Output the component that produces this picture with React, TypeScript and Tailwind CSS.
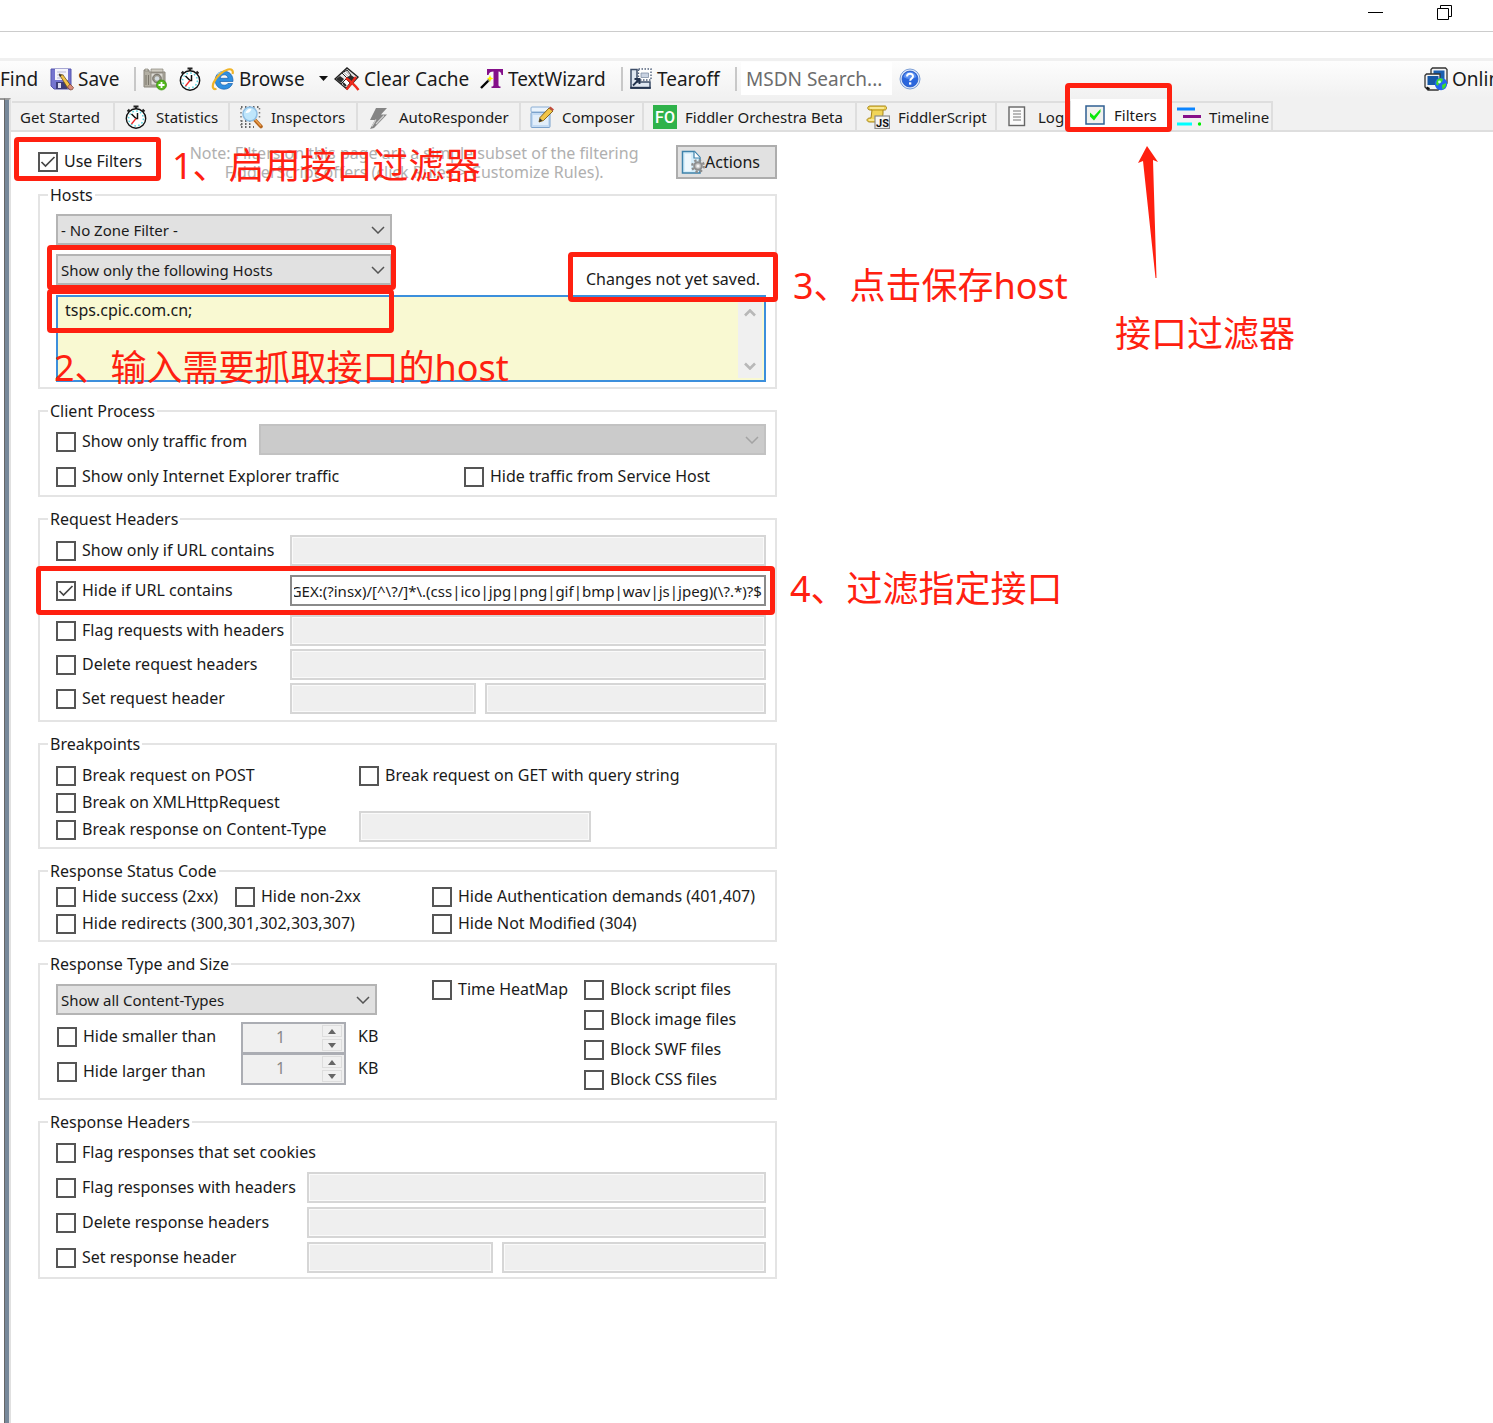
import { useEffect, useRef } from 'react';
import type { ReactNode } from 'react';

const FONT = "font-['Noto_Sans','Noto_Sans_CJK_SC',sans-serif]";

/* ---------- icons ---------- */

function SaveIcon() {
  return (
    <svg className="size-6 shrink-0" viewBox="0 0 24 24" aria-hidden="true">
      <path d="M1 2h20v20H4l-3-3z" fill="#7474cf" stroke="#5555ad" />
      <rect x="5" y="2" width="13" height="11" fill="#f4f4fb" />
      <path d="M7 5h9M7 8h7M7 11h5" stroke="#b9b9d8" />
      <rect x="6" y="15" width="11" height="7" fill="#3c3c78" />
      <rect x="8" y="16" width="3" height="5" fill="#dcdcf0" />
      <path d="M9 7l4 1 8 11-3 2.500z" fill="#f3c34a" stroke="#6d5318" strokeWidth=".8" />
      <path d="M9 7l.8 3 2-1.800z" fill="#333" />
      <path d="M20 17l3.500 3.500-1 2-2.500.5-2.500-3z" fill="#d98b7a" stroke="#77402f" strokeWidth=".7" />
    </svg>
  );
}

function CameraIcon() {
  return (
    <svg className="size-6 shrink-0" viewBox="0 0 24 24" aria-hidden="true">
      <path d="M1 3h5v2h16v15H1z" fill="#b3afa3" stroke="#88847a" />
      <path d="M2 2h3v2H2zM8 2h12v3H8z" fill="#d0cdc4" stroke="#88847a" strokeWidth=".7" />
      <path d="M3 8v10M5.500 8v10" stroke="#7a766b" />
      <rect x="8" y="6" width="12" height="12" fill="#dddbd4" stroke="#88847a" strokeWidth=".8" />
      <circle cx="14" cy="11.500" r="4.300" fill="#9a978d" stroke="#706d64" />
      <circle cx="14" cy="11.500" r="2.300" fill="#d3dbdf" />
      <circle cx="18.500" cy="18" r="5" fill="#52b81c" stroke="#3b8f10" strokeWidth=".7" />
      <path d="M18.500 15v6M15.500 18h6" stroke="#fff" strokeWidth="1.800" />
    </svg>
  );
}

function StopwatchIcon() {
  return (
    <svg className="size-6 shrink-0" viewBox="0 0 24 24" aria-hidden="true">
      <path d="M9.500 1.500h5M12 1v3M3.500 6.500l2-2M20.500 6.500l-2-2" stroke="#222" strokeWidth="1.800" fill="none" />
      <circle cx="12" cy="13.500" r="9.700" fill="#fff" stroke="#111" strokeWidth="1.400" />
      <circle cx="12" cy="13.500" r="7.400" fill="none" stroke="#5ad4e0" strokeWidth="1.500" strokeDasharray="1.600 2.270" />
      <path d="M7.500 9l4.500 4.500h1.500V8" stroke="#111" strokeWidth="1.500" fill="none" />
      <path d="M12 13.500L7.500 19" stroke="#f02828" strokeWidth="1.300" />
    </svg>
  );
}

function BrowserIcon() {
  return (
    <svg className="size-6 shrink-0" viewBox="0 0 24 24" aria-hidden="true">
      <path
        d="M22 14.500H9c.3 2.300 1.900 3.700 4.200 3.700 1.700 0 2.900-.6 3.700-1.700h4.600c-1.300 3.500-4.400 5.700-8.300 5.700-5.200 0-9-3.600-9-8.900C4.200 8 8 4.300 13.200 4.300c5.500 0 9.100 4.100 8.800 10.200zM9.100 11.300h8c-.3-2.200-1.800-3.500-3.900-3.500-2.200 0-3.700 1.300-4.100 3.500z"
        fill="#2f8fe0"
        stroke="#155fae"
        strokeWidth=".7"
      />
      <path d="M7 6c2-1.500 5-2 7-1.500-4 .5-7 3-8.500 6z" fill="#8fd0fa" />
      <path
        d="M21.500 7c1-3-.5-5.500-4.500-4.500C12 3.800 5.500 9 2.700 15.500.8 20 2 23 5.500 21.800"
        fill="none"
        stroke="#f0b428"
        strokeWidth="2.200"
      />
    </svg>
  );
}

function ClearCacheIcon() {
  return (
    <svg className="h-6 w-[26px] shrink-0" viewBox="0 0 26 24" aria-hidden="true">
      <path d="M1 12L13 1l11 9-11 12z" fill="#e8e8e8" stroke="#222" strokeWidth="1.400" />
      <path d="M8 6l5 5 4-3-4-5z" fill="#fff" stroke="#222" />
      <path d="M9.500 5l5 5M11 3.500l5 5" stroke="#777" strokeWidth=".8" />
      <path d="M13 11l4-3 4 3-5 5zM2 12l4-3 4 3-3 4z" fill="#2c2c2c" />
      <path d="M7 17l5-5 4 4-4 5z" fill="#fff" stroke="#222" />
      <path d="M9 16l3 3" stroke="#222" strokeWidth="1.800" />
      <path d="M12 11c4 3 9 7 12.500 12M22 10c-3 4-6 8-9.500 12.500" fill="none" stroke="#ee2a1c" strokeWidth="2.400" />
    </svg>
  );
}

function TextWizardIcon() {
  return (
    <svg className="size-6 shrink-0" viewBox="0 0 24 24" aria-hidden="true">
      <path d="M7 2h16v6h-1.500c-.3-2-1-3.500-3-3.500V18c0 1 .8 1.500 2 1.500V21h-9v-1.500c1.200 0 2-.5 2-1.500V4.500C11 4.500 8.800 5.500 8.500 8H7z" fill="#85108a" />
      <path d="M1 21l8-8" stroke="#000" strokeWidth="2.400" />
      <path d="M8 14l2.500-2.500" stroke="#777" strokeWidth="2" />
      <path d="M10 8l1 2.500 2.500 1-2.500 1-1 2.500-1-2.500-2-1 2-1z" fill="#fff200" />
    </svg>
  );
}

function TearoffIcon() {
  return (
    <svg className="size-6 shrink-0" viewBox="0 0 24 24" aria-hidden="true">
      <path d="M2 2.500h6V15h13v6H2z" fill="#dfe7f1" stroke="#3c4d68" strokeWidth="1.500" />
      <path d="M1.300 20.800h20.400" stroke="#24344f" strokeWidth="2" />
      <rect x="9.500" y="2" width="12.500" height="11" fill="#fff" stroke="#52627c" strokeWidth="1.400" strokeDasharray="1.500 1.500" />
      <path d="M12 6h7.500v4.500H12z" fill="#c9d3e2" stroke="#8290a6" strokeWidth=".8" />
      <path d="M4 18.500l6-6M5.500 12h5v5" stroke="#24344f" strokeWidth="1.800" fill="none" />
    </svg>
  );
}

function HelpIcon() {
  return (
    <svg className="size-[22px] shrink-0" viewBox="0 0 22 22" aria-hidden="true">
      <circle cx="11" cy="11" r="10" fill="#dce8fb" stroke="#7d9fd6" />
      <circle cx="11" cy="11" r="8" fill="#2a66dd" stroke="#1a4cb8" strokeWidth=".6" />
      <path d="M4.500 9a6.700 6.700 0 0 1 13 0c-4 2.500-9 2.500-13 0z" fill="#5d92f2" />
      <path d="M8 8.500c0-3.600 6-3.600 6-.3 0 2.200-2.800 2.300-2.800 4.600" fill="none" stroke="#fff" strokeWidth="2" />
      <rect x="10" y="14.300" width="2.300" height="2.300" fill="#fff" />
    </svg>
  );
}

function OnlineIcon() {
  return (
    <svg className="size-6 shrink-0" viewBox="0 0 24 24" aria-hidden="true">
      <path d="M7 2.500L8.500 1h13L23 2.500V16H7z" fill="#f4f4f4" stroke="#333" strokeWidth="1.300" />
      <rect x="9.500" y="3.500" width="11" height="10" fill="#1a5fb0" />
      <path d="M1 8.500L2.500 7H16v14.500L14 23H4l-3-3z" fill="#f4f4f4" stroke="#333" strokeWidth="1.300" />
      <rect x="3.500" y="9" width="11" height="9" fill="#1557a5" />
      <path d="M2.500 20.500l3 1.500" stroke="#111" strokeWidth="2" />
      <circle cx="17" cy="17" r="6.200" fill="#2266f0" />
      <path d="M13 13c2-2 4-2 6-1l-1 3-3 1-1 3-2-2zM18 18l4-2c.5 3-1 5-3.500 6.500z" fill="#3ee02a" />
      <circle cx="15.500" cy="15" r="1.400" fill="#c8fff0" />
    </svg>
  );
}

function InspectIcon() {
  return (
    <svg className="size-6 shrink-0" viewBox="0 0 24 24" aria-hidden="true">
      <path d="M2 2h19M2 16h11M2 19h12M2 22h13" stroke="#666" strokeWidth="1.800" strokeDasharray="1.500 2.500" />
      <path d="M2 3v18M20.500 3v12" stroke="#777" strokeWidth="1.500" strokeDasharray="1.500 2.500" />
      <path d="M15 14l7 7.500" stroke="#b5651d" strokeWidth="3.600" strokeLinecap="round" />
      <path d="M15.500 14l6 6.500" stroke="#eda04e" strokeWidth="1.400" strokeLinecap="round" />
      <circle cx="11" cy="9" r="7" fill="#bfe6fb" stroke="#8fbfe4" strokeWidth="1.600" />
      <path d="M6.500 8a5 5 0 0 1 6-4c-1 3-3 4.500-6 4z" fill="#fff" />
    </svg>
  );
}

function BoltIcon() {
  return (
    <svg className="size-6 shrink-0" viewBox="0 0 24 24" aria-hidden="true">
      <path d="M9 3h11l-6 6.500h6L7 23l-4 1 5-9H3z" fill="#858585" />
      <path d="M17 10.500l-8 8.500M9 14.500l-4 7" stroke="#d0d0d0" strokeWidth="1.200" />
    </svg>
  );
}

function ComposeIcon() {
  return (
    <svg className="size-6 shrink-0" viewBox="0 0 24 24" aria-hidden="true">
      <rect x="1" y="2" width="19" height="5" rx="1" fill="#eaf3fc" stroke="#8aaed4" />
      <rect x="1" y="7.500" width="19" height="15" rx="1" fill="#c4dbf3" stroke="#7ba2cc" />
      <path d="M3 10h15v10H3z" fill="#e2eefa" />
      <path d="M9 17l1-4.500L19 3l4 3-9.500 9.500z" fill="#f2c548" stroke="#7c5a14" strokeWidth=".9" />
      <path d="M9 17l1-3.500 2.500 2z" fill="#333" />
      <path d="M19 3l1.500-1.500L24 4.500 22.500 6z" fill="#c24b3c" />
    </svg>
  );
}

function OrchestraIcon() {
  return (
    <svg className="size-6 shrink-0" viewBox="0 0 24 24" aria-hidden="true">
      <rect width="24" height="24" fill="#2fb24a" />
      <text x="12" y="18" textAnchor="middle" className="font-['Roboto',sans-serif] text-base font-medium" fill="#fff">
        FO
      </text>
    </svg>
  );
}

function ScriptIcon() {
  return (
    <svg className="size-6 shrink-0" viewBox="0 0 24 24" aria-hidden="true">
      <path
        d="M4 1h15c2 0 2 4 0 4h-2v3c0 3-1 5-1 9H4c-4 0-4-4 0-4h1c0-3 1-5 1-8H4C1 5 1 1 4 1z"
        fill="#f0d458"
        stroke="#a88617"
      />
      <path d="M4 3h14M3 15h8" stroke="#fbeea6" strokeWidth="1.400" />
      <path d="M5 5h12" stroke="#b8951f" />
      <rect x="9" y="11" width="14.500" height="12.500" fill="#f6f6f6" stroke="#8a8a8a" strokeWidth="1.200" />
      <text x="16.500" y="21.500" textAnchor="middle" className="font-['Roboto',sans-serif] text-[11px] font-bold" fill="#111">
        JS
      </text>
    </svg>
  );
}

function LogIcon() {
  return (
    <svg className="size-6 shrink-0" viewBox="0 0 24 24" aria-hidden="true">
      <rect x="3" y="2" width="15.500" height="18.500" fill="#fbfbfb" stroke="#666" strokeWidth="1.400" />
      <path d="M7 6h8M7 9h8M7 12h8M7 15h8" stroke="#777" strokeWidth="1.200" />
    </svg>
  );
}

function FilterTickIcon() {
  return (
    <svg className="size-5 shrink-0" viewBox="0 0 20 20" aria-hidden="true">
      <rect x="1" y="1" width="18" height="18" fill="#f1f1ee" stroke="#2f5f92" strokeWidth="1.500" />
      <path d="M5 7.500v4l4 4 6.500-8.500V4L9 11z" fill="#0be80b" />
    </svg>
  );
}

function TimelineIcon() {
  return (
    <svg className="size-6 shrink-0" viewBox="0 0 24 24" aria-hidden="true">
      <path d="M0 4h18" stroke="#0a84ff" strokeWidth="3" />
      <path d="M6 11.500h18" stroke="#87108a" strokeWidth="3" />
      <path d="M0 19h15" stroke="#0ff" strokeWidth="3" />
      <circle cx="22.500" cy="19" r="1.700" fill="#0e0" />
    </svg>
  );
}

function ActionsIcon() {
  return (
    <svg className="size-6 shrink-0" viewBox="0 0 24 24" aria-hidden="true">
      <path d="M1.500 1.500h12l5.500 6V23H1.500z" fill="#d6eefa" stroke="#3e83ab" strokeWidth="1.500" />
      <path d="M13 1.500V8h6" fill="#fff" stroke="#3e83ab" strokeWidth="1.200" />
      <path d="M4 4h6v17H4z" fill="#eef8fd" />
      <circle cx="17" cy="16" r="5.800" fill="none" stroke="#8c8c8c" strokeWidth="2.200" strokeDasharray="2.400 2.150" />
      <circle cx="17" cy="16" r="3.800" fill="#c6c6c6" stroke="#8f8f8f" strokeWidth="2" />
      <circle cx="17" cy="16" r="1.500" fill="#f2f2f2" />
    </svg>
  );
}

function Chevron({ className }: { className: string }) {
  return (
    <svg className={className} viewBox="0 0 14 8" fill="none" aria-hidden="true">
      <path d="M1 1l6 6 6-6" stroke="currentColor" strokeWidth="1.500" />
    </svg>
  );
}

function ScrollArrow({ className }: { className: string }) {
  return (
    <svg className={`h-2 w-3 ${className}`} viewBox="0 0 12 8" fill="none" aria-hidden="true">
      <path d="M1 1.500l5 5 5-5" stroke="#b8b8b8" strokeWidth="2.600" />
    </svg>
  );
}

/* ---------- controls ---------- */

function Check({ label, checked, className = '' }: { label: string; checked?: boolean; className?: string }) {
  return (
    <label className={`flex shrink-0 items-center gap-1.5 whitespace-nowrap ${className}`}>
      <span className="grid size-5 shrink-0">
        <input
          type="checkbox"
          defaultChecked={checked}
          className="peer col-start-1 row-start-1 size-5 appearance-none border-2 border-[#555] bg-white"
        />
        <svg
          className="pointer-events-none invisible col-start-1 row-start-1 size-5 peer-checked:visible"
          viewBox="0 0 20 20"
          fill="none"
          aria-hidden="true"
        >
          <path d="M3.500 10l4 4L16.500 5" stroke="#444" strokeWidth="1.700" />
        </svg>
      </span>
      <span className="pb-0.5 leading-[18px]">{label}</span>
    </label>
  );
}

function Select({ value, label, className, disabled }: { value: string; label: string; className: string; disabled?: boolean }) {
  return (
    <span className={`grid h-[31px] ${className}`}>
      <select
        aria-label={label}
        disabled={disabled}
        className="col-start-1 row-start-1 w-full appearance-none border-2 border-[#b4b4b4] bg-[#e1e1e1] pl-[3px] text-[15px] leading-6 text-[#1a1a1a] disabled:border-[#c2c2c2] disabled:bg-[#cbcbcb]"
      >
        <option>{value}</option>
      </select>
      <Chevron
        className={
          disabled
            ? 'pointer-events-none col-start-1 row-start-1 mr-[7px] h-2 w-3.5 self-center justify-self-end text-[#a3a3a3]'
            : 'pointer-events-none col-start-1 row-start-1 mr-[7px] h-2 w-3.5 self-center justify-self-end text-[#555]'
        }
      />
    </span>
  );
}

function Field({ label, className }: { label: string; className: string }) {
  return (
    <input
      type="text"
      disabled
      aria-label={label}
      className={`h-[31px] min-w-0 border-2 border-[#d6d6d6] bg-[#efefef] shadow-[inset_0_0_0_1px_#fafafa] ${className}`}
    />
  );
}

function UrlPatternField() {
  const ref = useRef<HTMLInputElement>(null);
  useEffect(() => {
    if (ref.current) ref.current.scrollLeft = ref.current.scrollWidth;
  }, []);
  return (
    <input
      ref={ref}
      type="text"
      aria-label="Hide if URL contains pattern"
      defaultValue="REGEX:(?insx)/[^\?/]*\.(css|ico|jpg|png|gif|bmp|wav|js|jpeg)(\?.*)?$"
      className="h-[31px] min-w-0 flex-1 border-2 border-[#8a8a8a] bg-white px-0.5 text-[15px] text-[#1a1a1a]"
    />
  );
}

function Spinner({ label }: { label: string }) {
  return (
    <span className="flex h-8 w-[105px] border-2 border-[#abadb3] bg-[#f0f0f0]">
      <input
        type="text"
        disabled
        aria-label={label}
        defaultValue="1"
        className="min-w-0 flex-1 pr-1 pb-0.5 text-center text-[#888]"
      />
      <span className="flex w-[22px] flex-col gap-0.5 py-px pr-0.5">
        <button type="button" disabled aria-label={`Increase ${label}`} className="grid flex-1 place-items-center border border-[#ddd]">
          <svg className="h-[5px] w-2" viewBox="0 0 8 5" aria-hidden="true">
            <path d="M0 5l4-5 4 5z" fill="#666" />
          </svg>
        </button>
        <button type="button" disabled aria-label={`Decrease ${label}`} className="grid flex-1 place-items-center border border-[#ddd]">
          <svg className="h-[5px] w-2" viewBox="0 0 8 5" aria-hidden="true">
            <path d="M0 0l4 5 4-5z" fill="#666" />
          </svg>
        </button>
      </span>
    </span>
  );
}

function Group({ title, className, children }: { title: string; className: string; children: ReactNode }) {
  return (
    <fieldset className={`min-w-0 border-2 border-[#e4e4e4] pr-[9px] pl-4 ${className}`}>
      <legend className="-ml-2 px-0.5 text-base leading-[22px]">{title}</legend>
      {children}
    </fieldset>
  );
}

function Highlight({ className }: { className: string }) {
  return <span className={`pointer-events-none absolute z-10 rounded border-[5px] border-[#ff2010] ${className}`} />;
}

function Note({ className, children }: { className: string; children: ReactNode }) {
  return (
    <p className={`pointer-events-none absolute z-10 text-4xl leading-10 whitespace-nowrap text-[#ff2010] ${className}`}>
      {children}
    </p>
  );
}

/* ---------- bars ---------- */

function TitleBar() {
  return (
    <header className="flex h-8 items-start justify-end gap-[53px] border-b border-[#ccc] bg-white pt-[5px] pr-10">
      <button type="button" aria-label="Minimize" className="size-4">
        <svg viewBox="0 0 16 16" aria-hidden="true">
          <path d="M0 7.500h15" stroke="#000" />
        </svg>
      </button>
      <button type="button" aria-label="Restore" className="size-4">
        <svg viewBox="0 0 16 16" fill="none" stroke="#000" aria-hidden="true">
          <path d="M.5 3.500h11v11H.5zM3.500 3.500v-3h11v11h-3" />
        </svg>
      </button>
    </header>
  );
}

function ToolButton({ icon, label, className }: { icon?: ReactNode; label: string; className: string }) {
  return (
    <button type="button" className={`flex shrink-0 items-center gap-1 whitespace-nowrap ${className}`}>
      {icon}
      {label}
    </button>
  );
}

function Divider() {
  return <span className="h-6 w-0.5 shrink-0 bg-[#c8c8c8]" />;
}

function ToolBar() {
  return (
    <div
      role="toolbar"
      aria-label="Main"
      className="mt-[26px] flex h-10 items-center overflow-hidden border-t-[3px] border-[#f0f0f0] bg-linear-to-b from-[#fdfdfd] to-[#f1f1f1] pb-0.5 text-[19px] leading-6 text-[#1a1a1a]"
    >
      <ToolButton label="Find" className="w-[50px]" />
      <ToolButton icon={<SaveIcon />} label="Save" className="w-[84px]" />
      <Divider />
      <button type="button" aria-label="Screenshot" className="ml-[7px]">
        <CameraIcon />
      </button>
      <button type="button" aria-label="Timer" className="ml-[11px]">
        <StopwatchIcon />
      </button>
      <ToolButton icon={<BrowserIcon />} label="Browse" className="ml-[9px] w-[108px]" />
      <svg className="h-[5px] w-[9px] shrink-0" viewBox="0 0 9 5" aria-hidden="true">
        <path d="M0 0h9L4.500 5z" fill="#111" />
      </svg>
      <ToolButton icon={<ClearCacheIcon />} label="Clear Cache" className="ml-1.5 w-[146px]" />
      <ToolButton icon={<TextWizardIcon />} label="TextWizard" className="w-[141px]" />
      <Divider />
      <ToolButton icon={<TearoffIcon />} label="Tearoff" className="ml-[6px] w-[106px]" />
      <Divider />
      <input
        type="text"
        aria-label="MSDN Search"
        placeholder="MSDN Search..."
        className="ml-1 h-[33px] w-[151px] shrink-0 bg-white px-[5px] placeholder:text-[#6d6d6d]"
      />
      <button type="button" aria-label="Help" className="ml-[7px]">
        <HelpIcon />
      </button>
      <button type="button" className="ml-auto flex w-[69px] shrink-0 items-center gap-1 overflow-hidden whitespace-nowrap">
        <OnlineIcon />
        Online
      </button>
    </div>
  );
}

const tabs = [
  { label: 'Get Started', icon: null, size: 'w-[103px] pl-2' },
  { label: 'Statistics', icon: <StopwatchIcon />, size: 'w-[115px] pl-[9px]' },
  { label: 'Inspectors', icon: <InspectIcon />, size: 'w-[128px] pl-[9px]' },
  { label: 'AutoResponder', icon: <BoltIcon />, size: 'w-[163px] pl-[9px]' },
  { label: 'Composer', icon: <ComposeIcon />, size: 'w-[123px] pl-[9px]' },
  { label: 'Fiddler Orchestra Beta', icon: <OrchestraIcon />, size: 'w-[213px] pl-[9px]' },
  { label: 'FiddlerScript', icon: <ScriptIcon />, size: 'w-[140px] pl-[9px]' },
  { label: 'Log', icon: <LogIcon />, size: 'w-[74px] pl-[9px]' },
];

function TabStrip() {
  return (
    <div
      role="tablist"
      className="flex h-[34px] items-end border-b-2 border-[#dedede] bg-[#f1f1f1] pl-px text-[15px] leading-6"
    >
      {tabs.map((t) => (
        <button
          key={t.label}
          type="button"
          role="tab"
          aria-selected="false"
          className={`flex h-[29px] shrink-0 items-center gap-2 border-t-2 border-r-2 border-[#dedede] whitespace-nowrap ${t.size}`}
        >
          {t.icon}
          {t.label}
        </button>
      ))}
      <button
        type="button"
        role="tab"
        aria-selected="true"
        className="relative flex h-[31px] w-[101px] shrink-0 items-center gap-[9px] bg-white pl-3.5"
      >
        <FilterTickIcon />
        Filters
        <Highlight className="-top-4 right-0 -bottom-0.5 -left-1.5" />
      </button>
      <button
        type="button"
        role="tab"
        aria-selected="false"
        className="flex h-[29px] w-[101px] shrink-0 items-center gap-2 border-t-2 border-r-2 border-[#dedede] pl-[5px]"
      >
        <TimelineIcon />
        Timeline
      </button>
    </div>
  );
}

/* ---------- filter groups ---------- */

function HostsGroup() {
  return (
    <Group title="Hosts" className="pt-2 pb-[5px]">
      <Select label="Zone filter" value="- No Zone Filter -" className="w-[336px]" />
      <div className="mt-[9px] flex h-[41px] justify-between">
        <div className="relative">
          <Select label="Host filter" value="Show only the following Hosts" className="w-[336px]" />
          <Highlight className="-top-[9px] -right-1 -left-[9px] h-[45px]" />
        </div>
        <div className="relative w-[180px]">
          <p className="leading-[50px]">Changes not yet saved.</p>
          <Highlight className="-top-[2px] -right-3 -left-[18px] h-[50px]" />
          <Note className="top-3 left-[207px]">3、点击保存host</Note>
        </div>
      </div>
      <div className="relative flex border-2 border-[#3c8fdc] bg-[#f9f9d2]">
        <textarea
          aria-label="Hosts"
          defaultValue="tsps.cpic.com.cn;"
          className="h-[83px] min-w-0 flex-1 resize-none overflow-hidden px-[7px] pt-px leading-6 outline-none"
        />
        <div className="m-0.5 flex w-6 flex-col items-center justify-between bg-[#f0f0f0] pt-2.5 pb-2">
          <ScrollArrow className="rotate-180" />
          <ScrollArrow className="" />
        </div>
        <Highlight className="-top-2 -left-[11px] h-11 w-[347px]" />
        <Note className="top-[51px] -left-1">2、输入需要抓取接口的host</Note>
      </div>
    </Group>
  );
}

function ClientGroup() {
  return (
    <Group title="Client Process" className="pt-0.5 pb-px">
      <div className="flex h-[35px] items-center">
        <Check label="Show only traffic from" className="w-[203px]" />
        <Select label="Process" value="" disabled className="flex-1 self-start" />
      </div>
      <div className="flex h-[35px] items-center">
        <Check label="Show only Internet Explorer traffic" className="w-[408px]" />
        <Check label="Hide traffic from Service Host" />
      </div>
    </Group>
  );
}

function RequestHeadersGroup() {
  return (
    <Group title="Request Headers" className="pt-[5px] pb-1.5">
      <div className="flex flex-col gap-[3px]">
        <div className="mb-1.5 flex">
          <Check label="Show only if URL contains" className="w-[234px]" />
          <Field label="Show only if URL contains pattern" className="flex-1" />
        </div>
        <div className="relative mb-1.5 flex">
          <Check label="Hide if URL contains" checked className="w-[234px]" />
          <UrlPatternField />
          <Highlight className="-inset-y-[9px] -right-[9px] -left-5" />
          <Note className="-top-1.5 left-[734px]">4、过滤指定接口</Note>
        </div>
        <div className="flex">
          <Check label="Flag requests with headers" className="w-[234px]" />
          <Field label="Headers to flag" className="flex-1" />
        </div>
        <div className="flex">
          <Check label="Delete request headers" className="w-[234px]" />
          <Field label="Headers to delete" className="flex-1" />
        </div>
        <div className="flex">
          <Check label="Set request header" className="w-[234px]" />
          <Field label="Request header name" className="mr-[9px] w-[186px]" />
          <Field label="Request header value" className="flex-1" />
        </div>
      </div>
    </Group>
  );
}

function BreakpointsGroup() {
  return (
    <Group title="Breakpoints" className="pt-[7px] pb-1">
      <div className="flex">
        <div className="flex w-[303px] flex-col">
          <Check label="Break request on POST" className="h-[27px]" />
          <Check label="Break on XMLHttpRequest" className="h-[27px]" />
          <Check label="Break response on Content-Type" className="h-[27px]" />
        </div>
        <div className="flex flex-col">
          <Check label="Break request on GET with query string" className="h-[27px]" />
          <Field label="Content type" className="mt-[22px] w-[232px]" />
        </div>
      </div>
    </Group>
  );
}

function StatusGroup() {
  return (
    <Group title="Response Status Code" className="pt-px pb-[3px]">
      <div className="flex h-[27px] items-center">
        <Check label="Hide success (2xx)" className="w-[179px]" />
        <Check label="Hide non-2xx" className="w-[197px]" />
        <Check label="Hide Authentication demands (401,407)" />
      </div>
      <div className="flex h-[27px] items-center">
        <Check label="Hide redirects (300,301,302,303,307)" className="w-[376px]" />
        <Check label="Hide Not Modified (304)" />
      </div>
    </Group>
  );
}

function TypeGroup() {
  return (
    <Group title="Response Type and Size" className="pb-[3px]">
      <div className="flex">
        <div className="w-[376px] pt-[9px]">
          <Select label="Content type filter" value="Show all Content-Types" className="w-[321px]" />
          <div className="mt-[7px] flex pl-px">
            <div className="-mt-[3px] flex w-[184px] flex-col">
              <Check label="Hide smaller than" className="h-[35px]" />
              <Check label="Hide larger than" className="h-[35px]" />
            </div>
            <div className="flex flex-col -space-y-px">
              <Spinner label="minimum size" />
              <Spinner label="maximum size" />
            </div>
            <div className="-mt-0.5 ml-3 flex flex-col">
              <span className="leading-8">KB</span>
              <span className="leading-8">KB</span>
            </div>
          </div>
        </div>
        <Check label="Time HeatMap" className="h-[30px] w-[152px]" />
        <div className="flex flex-col">
          <Check label="Block script files" className="h-[30px]" />
          <Check label="Block image files" className="h-[30px]" />
          <Check label="Block SWF files" className="h-[30px]" />
          <Check label="Block CSS files" className="h-[30px]" />
        </div>
      </div>
    </Group>
  );
}

function ResponseHeadersGroup() {
  return (
    <Group title="Response Headers" className="py-1">
      <div className="flex flex-col gap-1">
        <Check label="Flag responses that set cookies" className="h-[31px]" />
        <div className="flex">
          <Check label="Flag responses with headers" className="w-[251px]" />
          <Field label="Response headers to flag" className="flex-1" />
        </div>
        <div className="flex">
          <Check label="Delete response headers" className="w-[251px]" />
          <Field label="Response headers to delete" className="flex-1" />
        </div>
        <div className="flex">
          <Check label="Set response header" className="w-[251px]" />
          <Field label="Response header name" className="mr-[9px] w-[186px]" />
          <Field label="Response header value" className="flex-1" />
        </div>
      </div>
    </Group>
  );
}

function FiltersPanel() {
  return (
    <section className="relative flex-1">
      <div className="ml-[27px] flex w-full max-w-[739px] flex-col gap-[11px]">
        <div className="-mb-[11px] flex h-[52px] items-start justify-between">
          <div className="relative mt-5">
            <Check label="Use Filters" checked className="h-5" />
            <Highlight className="-top-[15px] -right-[19px] -left-6 h-11" />
            <Note className="-top-1.5 left-[134px]">1、启用接口过滤器</Note>
          </div>
          <p className="mt-3 pl-2.5 text-center leading-[19px] text-[#b0b0b0]">
            Note: Filters on this page are a simple subset of the filtering
            <br />
            FiddlerScript offers (click Rules &gt; Customize Rules).
          </p>
          <button
            type="button"
            className="mt-[13px] flex h-[34px] w-[101px] items-center border-2 border-[#adadad] bg-[#e1e1e1] pl-[3px]"
          >
            <ActionsIcon />
            Actions
          </button>
        </div>
        <HostsGroup />
        <ClientGroup />
        <RequestHeadersGroup />
        <BreakpointsGroup />
        <StatusGroup />
        <TypeGroup />
        <ResponseHeadersGroup />
      </div>
      <svg className="absolute top-3.5 left-[1127px] h-[132px] w-5" viewBox="0 0 20 132" aria-hidden="true">
        <path d="M9 0l11 16-5-2 3.500 118h-1L5 15l-5 2z" fill="#ff2010" />
      </svg>
      <Note className="top-[182px] left-[1104px]">接口过滤器</Note>
    </section>
  );
}

export default function App() {
  return (
    <div className={`flex min-h-screen flex-col overflow-x-hidden bg-white text-base text-[#1a1a1a] ${FONT}`}>
      <TitleBar />
      <ToolBar />
      <main className="flex flex-1">
        <div className="w-1 shrink-0 border-t-2 border-[#999]" />
        <div className="w-[7px] shrink-0 border-t-2 border-r-2 border-l border-t-[#999] border-r-[#e0e0e0] border-l-[#666] bg-[#778899]" />
        <div className="flex min-w-0 flex-1 flex-col">
          <TabStrip />
          <FiltersPanel />
        </div>
      </main>
    </div>
  );
}
